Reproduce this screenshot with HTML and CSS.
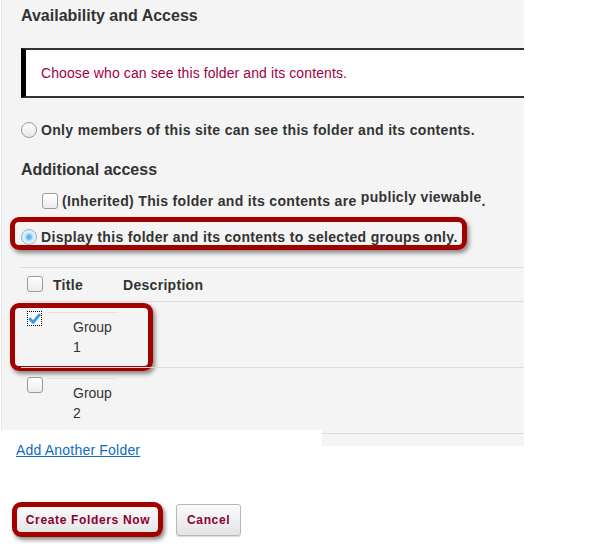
FILE: index.html
```html
<!DOCTYPE html>
<html>
<head>
<meta charset="utf-8">
<link rel="stylesheet" href="styles.css">
</head>
<body>
<div class="panel">
  <h3 class="heading">Availability and Access</h3>
  <div class="info">Choose who can see this folder and its contents.</div>
  <div class="opt opt-first"><span class="radio"></span><span>Only members of this site can see this folder and its contents.</span></div>
  <h3 class="heading heading-2">Additional access</h3>
  <div class="opt opt-sub"><span class="cb"></span><span>(Inherited) This folder and its contents are <span class="raised">publicly viewable</span>.</span></div>
  <div class="opt opt-groups hl hl-1"><span class="radio on"></span><span>Display this folder and its contents to selected groups only.</span></div>
  <div class="grid">
    <div class="row head">
      <div class="c-cb"><span class="cb"></span></div>
      <div class="c-title">Title</div>
      <div class="c-desc">Description</div>
    </div>
    <div class="row group hl hl-2">
      <div class="c-cb"><span class="cb checked"><svg viewBox="0 0 14 14" width="14" height="14"><path d="M2.2 7 L5.6 10.6 L12 2.8" fill="none" stroke="#3f97dd" stroke-width="3.2" stroke-linecap="round" stroke-linejoin="round"/></svg></span></div>
      <div class="c-title"><span class="gname">Group 1</span></div>
      <div class="c-desc"></div>
    </div>
    <div class="row group">
      <div class="c-cb"><span class="cb"></span></div>
      <div class="c-title"><span class="gname">Group 2</span></div>
      <div class="c-desc"></div>
    </div>
  </div>
</div>
<div class="foot"><a class="link" href="#">Add Another Folder</a></div>
<div class="buttons">
  <button class="btn btn-main hl hl-3">Create Folders Now</button>
  <button class="btn">Cancel</button>
</div>
</body>
</html>
```
FILE: styles.css
```css
html, body {
  margin: 0;
  padding: 0;
  background: #ffffff;
}
body {
  font-family: "Liberation Sans", Arial, sans-serif;
  color: #333333;
  width: 613px;
  height: 556px;
  overflow: hidden;
}
.panel {
  margin-left: 1px;
  width: 523px;
  height: 446px;
  box-sizing: border-box;
  border-left: 1px solid #e4e4e4;
  background: #f4f4f4;
  padding-left: 19px;
  overflow: hidden;
  display: flex;
  flex-direction: column;
}
.heading {
  margin: 0;
  height: 30px;
  line-height: 32px;
  font-size: 16px;
  font-weight: bold;
  color: #333;
}
.heading-2 {
  margin-top: 14px;
  line-height: 31px;
}
.info {
  margin-top: 18px;
  margin-right: -20px;
  height: 50px;
  box-sizing: border-box;
  border-top: 2px solid #333;
  border-bottom: 2px solid #333;
  border-left: 5px solid #000;
  background: #fff;
  padding-left: 15px;
  line-height: 46px;
  font-size: 14px;
  letter-spacing: 0.1px;
  color: #a00046;
}
.opt {
  display: flex;
  align-items: center;
  gap: 4px;
  height: 20px;
  font-size: 14px;
  letter-spacing: 0.33px;
  font-weight: bold;
  color: #333;
  position: relative;
  white-space: nowrap;
}
.opt-first {
  margin-top: 22px;
}
.opt-sub {
  margin-top: 7px;
  padding-left: 21px;
}
.opt-groups {
  margin-top: 16px;
}
.raised {
  position: relative;
  top: -4px;
}
.radio {
  flex: none;
  width: 16px;
  height: 16px;
  box-sizing: border-box;
  border-radius: 50%;
  border: 1px solid #9a9a9a;
  background: linear-gradient(#ffffff, #e6e6e6);
}
.radio.on {
  border-color: #8fb1cf;
  background: radial-gradient(circle, #4aa6ea 0, #7cc0f0 2.5px, #cfe6f8 4px, #e6f2fb 7px);
}
.cb {
  flex: none;
  display: inline-flex;
  align-items: center;
  justify-content: center;
  width: 16px;
  height: 16px;
  box-sizing: border-box;
  border: 1px solid #9a9a9a;
  border-radius: 3px;
  background: linear-gradient(#ffffff, #ececec);
}
.cb.checked {
  border: 1px dotted #000;
  border-radius: 0;
  background: #fff;
  width: 15px;
  height: 15px;
}
.grid {
  margin-top: 20px;
  display: flex;
  flex-direction: column;
}
.row {
  display: grid;
  grid-template-columns: 27px 70px 1fr;
  border-top: 1px solid #dcdcdc;
  position: relative;
}
.row.head {
  height: 33px;
  align-items: center;
  font-size: 14px;
  font-weight: bold;
  letter-spacing: 0.3px;
}
.row.head .c-cb {
  padding-left: 6px;
  padding-top: 2px;
}
.row.head .c-title {
  padding-left: 5px;
}
.row.head .c-desc {
  padding-left: 5px;
}
.row.group {
  height: 66px;
  box-sizing: border-box;
  font-size: 14px;
}
.row.group .c-cb {
  padding-left: 6px;
  padding-top: 9px;
}
.row.group .c-title {
  margin-top: 10px;
  border-top: 1px solid #e2e2e2;
  padding-top: 4px;
  padding-left: 25px;
  align-self: start;
}
.gname {
  display: block;
  width: 42px;
  line-height: 20px;
  color: #333;
}
.row.group:last-child {
  height: 67px;
  border-bottom: 1px solid #dcdcdc;
}
.foot {
  position: relative;
  margin-top: -16px;
  width: 322px;
  height: 44px;
  background: #fff;
  padding-left: 16px;
  padding-top: 10px;
  box-sizing: border-box;
}
.link {
  font-size: 14px;
  line-height: 20px;
  letter-spacing: 0.2px;
  color: #0f6cc4;
  text-decoration: underline;
}
.buttons {
  display: flex;
  gap: 15px;
  margin-top: 30px;
  margin-left: 15px;
}
.btn {
  height: 32px;
  padding: 0 10px;
  font-family: "Liberation Sans", Arial, sans-serif;
  font-size: 12px;
  font-weight: bold;
  letter-spacing: 0.65px;
  white-space: nowrap;
  color: #8a0033;
  border: 1px solid #b8b8b8;
  border-radius: 3px;
  background: linear-gradient(#fbfbfb, #e4e4e4);
  box-shadow: 0 1px 1px rgba(0,0,0,0.15);
  position: relative;
}
.btn-main {
  width: 146px;
  padding: 0;
}
.hl::after {
  content: "";
  position: absolute;
  border: 5px solid #a30000;
  border-radius: 9px;
  box-shadow: 2px 3px 4px rgba(0,0,0,0.45);
  pointer-events: none;
}
.hl-1::after {
  left: -11px;
  width: 447px;
  top: -10px;
  height: 23px;
}
.hl-2::after {
  left: -11px;
  width: 133px;
  top: 1px;
  height: 58px;
}
.hl-3::after {
  left: -4px;
  width: 141px;
  top: -3px;
  height: 25px;
}
```
